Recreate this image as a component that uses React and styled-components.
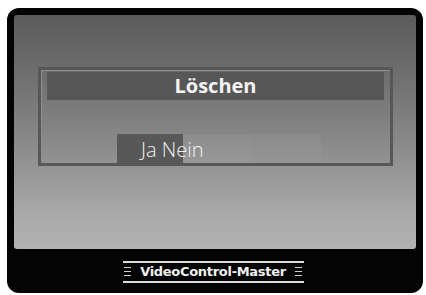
import React from "react";
import styled, { createGlobalStyle } from "styled-components";

const GlobalStyle = createGlobalStyle`
  body {
    margin: 0;
    background: #ffffff;
    font-family: "Open Sans", "DejaVu Sans", sans-serif;
  }
`;

const Page = styled.div`
  width: 426px;
  height: 295px;
  padding: 8px 3px 2px 7px;
  box-sizing: border-box;
`;

const Frame = styled.div`
  width: 416px;
  height: 285px;
  box-sizing: border-box;
  background: #040404;
  border-radius: 12px;
  padding: 7px 7px 0 7px;
  display: flex;
  flex-direction: column;
`;

const Screen = styled.div`
  height: 234px;
  border-radius: 3px;
  background: linear-gradient(
    to bottom,
    #5b5b5b 0%,
    #6e6e6e 25%,
    #8a8a8a 55%,
    #a9a9a9 85%,
    #b2b2b2 100%
  );
  padding: 52px 0 0 24px;
  box-sizing: border-box;
`;

const Dialog = styled.div`
  width: 355px;
  height: 99px;
  box-sizing: border-box;
  border: 3px solid #575757;
  box-shadow: inset 1px 1px 0 #8f8f8f;
  padding: 2px 6px 0 6px;
  display: flex;
  flex-direction: column;
`;

const TitleBar = styled.div`
  height: 28px;
  background: #575757;
  color: #f4f4f4;
  font-weight: 700;
  font-size: 20px;
  line-height: 28px;
  text-align: center;
`;

const Options = styled.div`
  margin: auto -6px 0 -6px;
  height: 29px;
  box-sizing: border-box;
  padding: 3px 0 0 100px;
  background: linear-gradient(
    to right,
    transparent 76px,
    #585858 76px,
    #585858 142px,
    rgba(255, 255, 255, 0.05) 142px,
    rgba(255, 255, 255, 0.05) 210px,
    rgba(255, 255, 255, 0.03) 210px,
    rgba(255, 255, 255, 0.03) 280px,
    transparent 280px
  );
  color: #f2f2f2;
  font-weight: 300;
  font-size: 20px;
  line-height: 26px;
`;

const Footer = styled.div`
  flex: 1;
  display: flex;
  align-items: center;
  justify-content: center;
  padding-right: 4px;
`;

const Badge = styled.div`
  width: 181px;
  height: 22px;
  box-sizing: border-box;
  border-top: 2px solid #dcdcdc;
  border-bottom: 2px solid #dcdcdc;
  display: flex;
  align-items: center;
  justify-content: space-between;
  padding: 0 1px;
  margin-top: 1px;
`;

const Label = styled.span`
  color: #f0f0f0;
  font-family: "DejaVu Sans", sans-serif;
  font-weight: 700;
  font-size: 13px;
  letter-spacing: -0.3px;
`;

const Grip = styled.span`
  width: 7px;
  height: 9px;
  background: repeating-linear-gradient(
    to bottom,
    #d0d0d0 0,
    #d0d0d0 1px,
    transparent 1px,
    transparent 4px
  );
`;

export default function App() {
  return (
    <>
      <GlobalStyle />
      <Page>
        <Frame>
          <Screen>
            <Dialog>
              <TitleBar>Löschen</TitleBar>
              <Options>Ja Nein</Options>
            </Dialog>
          </Screen>
          <Footer>
            <Badge>
              <Grip />
              <Label>VideoControl-Master</Label>
              <Grip />
            </Badge>
          </Footer>
        </Frame>
      </Page>
    </>
  );
}
